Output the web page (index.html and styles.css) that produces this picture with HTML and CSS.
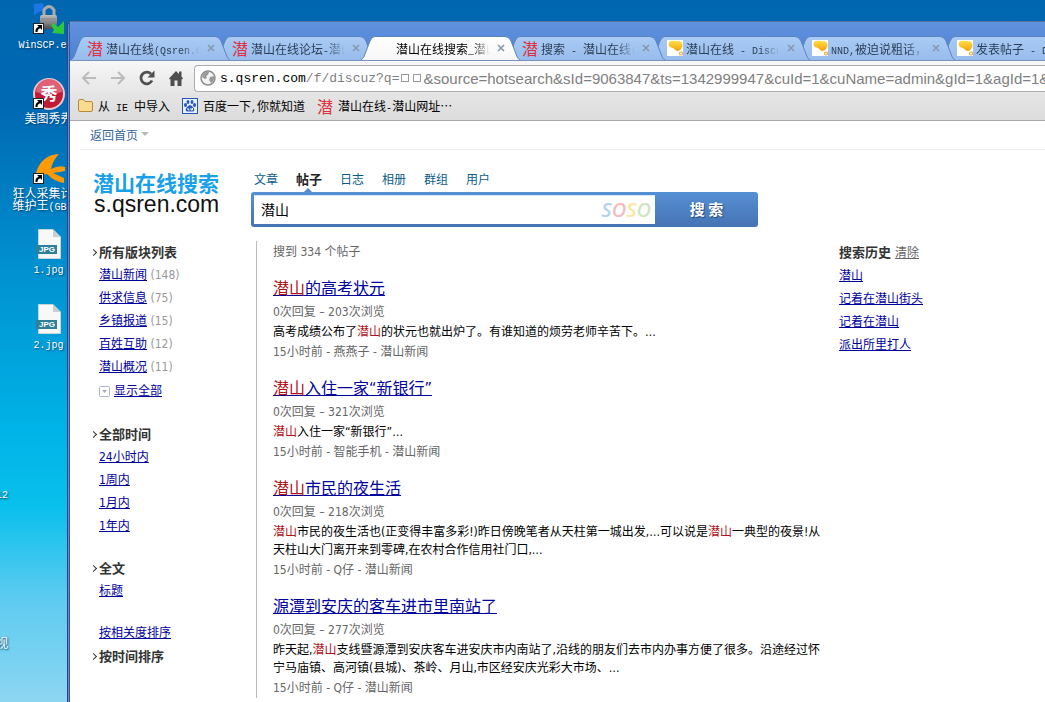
FILE: index.html
```html
<!DOCTYPE html>
<html lang="zh-CN">
<head>
  <meta charset="UTF-8">
  <title>潜山在线搜索_潜山</title>
  <link rel="stylesheet" href="styles.css">
</head>
<body>

  <!-- shared shapes -->
  <svg class="defs" width="0" height="0">
    <linearGradient id="tabBlue" x1="0" y1="0" x2="0" y2="1">
      <stop offset="0" stop-color="#a9cbf5"/><stop offset="1" stop-color="#98bcec"/>
    </linearGradient>
    <linearGradient id="tabWhite" x1="0" y1="0" x2="0" y2="1">
      <stop offset="0" stop-color="#ffffff"/><stop offset="1" stop-color="#f7f7f7"/>
    </linearGradient>
    <linearGradient id="gold" x1="0" y1="0" x2="0" y2="1">
      <stop offset="0" stop-color="#ffe04a"/><stop offset="1" stop-color="#f6a10c"/>
    </linearGradient>
    <linearGradient id="steel" x1="0" y1="0" x2="0" y2="1">
      <stop offset="0" stop-color="#bdbdbd"/><stop offset="1" stop-color="#4e4e4e"/>
    </linearGradient>
    <symbol id="tab" viewBox="0 0 160 24">
      <path d="M0.5 24C3 23 4 21 5 18L10 5Q12 0.5 15 0.5H145Q149 0.5 151 5L156 18C157 21 158 23 160 24"/>
    </symbol>
    <symbol id="x" viewBox="0 0 8 8">
      <path d="M1 1L7 7M7 1L1 7" stroke="#8798ae" stroke-width="1.6"/>
    </symbol>
    <symbol id="bubble" viewBox="0 0 16 16">
      <rect width="16" height="16" fill="#fff"/>
      <path d="M2 2Q4 0 10 1Q16 1 15.500 6Q14 11 10 11Q8 10 6 8Q0 7 2 2Z" fill="url(#gold)"/>
      <circle cx="14" cy="13.5" r="1.5" fill="none" stroke="#f6a93a" stroke-width="1.2"/>
    </symbol>
    <symbol id="shortcut" viewBox="0 0 11 11">
      <rect x="0.5" y="0.5" width="10" height="10" fill="#fff" stroke="#222"/>
      <path d="M4 2H9V7L7.300 5.300Q4.500 6 4.500 9H2.500Q2 5 5.700 3.700Z" fill="#000"/>
    </symbol>
    <symbol id="jpg" viewBox="0 0 26 30">
      <path d="M2.500 0.500H17L24.500 8V29.500H2.500Z" fill="#f8f8f8" stroke="#c9d4d9"/>
      <path d="M17 0.500V8H24.500Z" fill="#c8cdd0"/>
      <rect x="0" y="16" width="21" height="9" fill="#2f7f9a"/>
    </symbol>
  </svg>

  <div class="desktop">
    <div class="icons">
      <div class="shortcut">
        <div class="picture">
          <svg width="32" height="32" viewBox="0 0 32 32">
            <path d="M1 1L10 0L12 10L8 8L1 12Z" fill="#1977e8"/>
            <path d="M11 14V7Q16 0 21 7V14" fill="none" stroke="#aaa" stroke-width="3"/>
            <rect x="7" y="12" width="17" height="14" rx="2" fill="url(#steel)"/>
            <path d="M8 16H23M8 20H23" stroke="#888"/>
            <path d="M18 22L21 20L25 24L31 18V31L19 30L21 27Z" fill="#2dc640"/>
          </svg>
          <svg class="arrow" width="11" height="11"><use href="#shortcut"/></svg>
        </div>
        <span class="label"><span class="mono">WinSCP.exe</span></span>
      </div>
      <div class="shortcut">
        <div class="picture">
          <svg width="32" height="32" viewBox="0 0 32 32">
            <circle cx="16" cy="16" r="15" fill="#c11c37" stroke="#e7c9cf" stroke-width="2"/>
            <path d="M3 14A13 13 0 0 1 29 14Q16 18 3 14Z" fill="#df6076"/>
            <text class="seal" x="16" y="22" text-anchor="middle">秀</text>
          </svg>
          <svg class="arrow" width="11" height="11"><use href="#shortcut"/></svg>
        </div>
        <span class="label">美图秀秀</span>
      </div>
      <div class="shortcut">
        <div class="picture">
          <svg width="32" height="32" viewBox="0 0 32 32">
            <path d="M3 20Q8 2 26 1Q20 7 18 16Q26 12 32 14V18L20 20L31 25V30Q22 29 14 21L3 23Z" fill="#ff9a05"/>
          </svg>
          <svg class="arrow" width="11" height="11"><use href="#shortcut"/></svg>
        </div>
        <span class="label">狂人采集计划<br>维护王<span class="mono">(GBK)</span></span>
      </div>
      <div class="shortcut">
        <div class="picture">
          <svg width="26" height="30"><use href="#jpg"/><text class="ext" x="3" y="23">JPG</text></svg>
        </div>
        <span class="label"><span class="mono">1.jpg</span></span>
      </div>
      <div class="shortcut">
        <div class="picture">
          <svg width="26" height="30"><use href="#jpg"/><text class="ext" x="3" y="23">JPG</text></svg>
        </div>
        <span class="label"><span class="mono">2.jpg</span></span>
      </div>
      <span class="label stray stray-number"><span class="mono">12</span></span>
      <span class="label stray stray-video">视</span>
    </div>

    <div class="window">
      <div class="tabs">
        <div class="tab">
          <svg class="shape"><use href="#tab"/></svg>
          <span class="favicon">潜</span>
          <span class="title">潜山在线<span class="mono">(Qsren.Com)</span></span>
          <button aria-label="关闭"><svg width="8" height="8"><use href="#x"/></svg></button>
        </div>
        <div class="tab">
          <svg class="shape"><use href="#tab"/></svg>
          <span class="favicon">潜</span>
          <span class="title">潜山在线论坛<span class="mono">-</span>潜山</span>
          <button aria-label="关闭"><svg width="8" height="8"><use href="#x"/></svg></button>
        </div>
        <div class="tab active">
          <svg class="shape"><use href="#tab"/></svg>
          <span class="favicon"></span>
          <span class="title">潜山在线搜索<span class="mono">_</span>潜山</span>
          <button aria-label="关闭"><svg width="8" height="8"><use href="#x"/></svg></button>
        </div>
        <div class="tab">
          <svg class="shape"><use href="#tab"/></svg>
          <span class="favicon">潜</span>
          <span class="title">搜索<span class="mono"> - </span>潜山在线<span class="mono">(Q</span></span>
          <button aria-label="关闭"><svg width="8" height="8"><use href="#x"/></svg></button>
        </div>
        <div class="tab">
          <svg class="shape"><use href="#tab"/></svg>
          <span class="favicon"><svg width="16" height="16"><use href="#bubble"/></svg></span>
          <span class="title">潜山在线<span class="mono"> - Discuz</span></span>
          <button aria-label="关闭"><svg width="8" height="8"><use href="#x"/></svg></button>
        </div>
        <div class="tab">
          <svg class="shape"><use href="#tab"/></svg>
          <span class="favicon"><svg width="16" height="16"><use href="#bubble"/></svg></span>
          <span class="title"><span class="mono">NND,</span>被迫说粗话，</span>
          <button aria-label="关闭"><svg width="8" height="8"><use href="#x"/></svg></button>
        </div>
        <div class="tab">
          <svg class="shape"><use href="#tab"/></svg>
          <span class="favicon"><svg width="16" height="16"><use href="#bubble"/></svg></span>
          <span class="title">发表帖子<span class="mono"> - Discuz</span></span>
          <button aria-label="关闭"><svg width="8" height="8"><use href="#x"/></svg></button>
        </div>
      </div>

      <div class="toolbar">
        <button aria-label="后退"><svg width="16" height="14" viewBox="0 0 16 14"><path d="M15 7H2M8 1L2 7L8 13" fill="none" stroke="#bbb" stroke-width="2"/></svg></button>
        <button aria-label="前进"><svg width="16" height="14" viewBox="0 0 16 14"><path d="M1 7H14M8 1L14 7L8 13" fill="none" stroke="#bbb" stroke-width="2"/></svg></button>
        <button aria-label="刷新"><svg width="16" height="16" viewBox="0 0 16 16"><path d="M13 10.500A5.800 5.800 0 1 1 12 4" fill="none" stroke="#4f4f4f" stroke-width="2.800"/><path d="M15.500 0.500V7.500H8.500Z" fill="#4f4f4f"/></svg></button>
        <button aria-label="主页"><svg width="16" height="16" viewBox="0 0 16 16"><path d="M8 1L11 4V1.500H13.500V6.500L15 8.500L14 9.500L13.500 9V16H9.500V10.500H6.500V16H2.500V9L2 9.500L1 8.500Z" fill="#4f4f4f"/></svg></button>
        <div class="address">
          <svg width="16" height="16" viewBox="0 0 16 16">
            <circle cx="8" cy="8" r="7" fill="#f4f4f4" stroke="#8c8c8c" stroke-width="1.500"/>
            <path d="M3 4Q6 1 9 2L8 5L6 6L7 8L5 9L2 7ZM10 7L14 6Q15 11 11 13L9 10Z" fill="#999"/>
          </svg>
          <span class="url"><span class="path"><b>s.qsren.com</b>/f/discuz?q=</span><span class="glyph"></span><span class="glyph"></span>&amp;source=hotsearch&amp;sId=9063847&amp;ts=1342999947&amp;cuId=1&amp;cuName=admin&amp;gId=1&amp;agId=1&amp;ext=1</span>
        </div>
      </div>

      <div class="bookmarks">
        <a href="#">
          <svg width="15" height="13" viewBox="0 0 15 13"><path d="M0.500 11V2Q0.500 0.500 2 0.500H5.500L7 2.500H13Q14.500 2.500 14.500 4V11Q14.500 12.500 13 12.500H2Q0.500 12.500 0.500 11Z" fill="#fbdc8f" stroke="#b98a3c"/></svg>
          <span>从<span class="mono"> IE </span>中导入</span>
        </a>
        <a href="#">
          <svg width="16" height="16" viewBox="0 0 16 16">
            <rect x="0.500" y="0.500" width="15" height="15" fill="#e8f0fc" stroke="#2a55b8"/>
            <g fill="#2a55b8"><ellipse cx="3.500" cy="7" rx="1.500" ry="2"/><ellipse cx="6" cy="4" rx="1.400" ry="2"/><ellipse cx="10" cy="4" rx="1.400" ry="2"/><ellipse cx="12.500" cy="7" rx="1.500" ry="2"/><path d="M8 7Q10 7 12 10.500Q13 14 10 13.500H6Q3 14 4 10.500Q6 7 8 7Z"/></g>
            <path d="M6 10V12H7.500M9 10V12H10.500V10" fill="none" stroke="#fff"/>
          </svg>
          <span>百度一下<span class="mono">,</span>你就知道</span>
        </a>
        <a href="#"><span class="favicon">潜</span><span>潜山在线<span class="mono">-</span>潜山网址…</span></a>
      </div>

      <div class="page">
        <div class="topnav"><a href="#">返回首页</a><span class="caret"></span></div>

        <header>
          <a class="logo" href="#">
            <span class="logo-name">潜山在线搜索</span>
            <span class="logo-url">s.qsren.com</span>
          </a>
          <div class="search">
            <nav>
              <a href="#">文章</a>
              <a href="#" class="current">帖子</a>
              <a href="#">日志</a>
              <a href="#">相册</a>
              <a href="#">群组</a>
              <a href="#">用户</a>
            </nav>
            <form>
              <div class="field">
                <input type="text" value="潜山" aria-label="搜索关键词">
                <span class="soso"><i class="s1">S</i><i class="o1">O</i><i class="s2">S</i><i class="o2">O</i></span>
              </div>
              <button type="button">搜 索</button>
            </form>
          </div>
        </header>

        <div class="columns">
          <aside class="filters">
            <ul>
              <li class="on">所有版块列表</li>
              <li><a href="#">潜山新闻</a> (148)</li>
              <li><a href="#">供求信息</a> (75)</li>
              <li><a href="#">乡镇报道</a> (15)</li>
              <li><a href="#">百姓互助</a> (12)</li>
              <li><a href="#">潜山概况</a> (11)</li>
              <li class="more">
                <svg width="11" height="11" viewBox="0 0 11 11"><rect x="0.500" y="0.500" width="10" height="10" rx="1" fill="#fff" stroke="#a9b4d0"/><path d="M3 4H8L5.500 7Z" fill="#a3abc0"/></svg>
                <a href="#">显示全部</a>
              </li>
            </ul>
            <ul>
              <li class="on">全部时间</li>
              <li><a href="#">24小时内</a></li>
              <li><a href="#">1周内</a></li>
              <li><a href="#">1月内</a></li>
              <li><a href="#">1年内</a></li>
            </ul>
            <ul>
              <li class="on">全文</li>
              <li><a href="#">标题</a></li>
            </ul>
            <ul>
              <li><a href="#">按相关度排序</a></li>
              <li class="on">按时间排序</li>
            </ul>
          </aside>

          <main>
            <p class="count">搜到 334 个帖子</p>
            <article>
              <h3><a href="#"><em>潜山</em>的高考状元</a></h3>
              <p class="meta">0次回复 – 203次浏览</p>
              <p class="text">高考成绩公布了<em>潜山</em>的状元也就出炉了。有谁知道的烦劳老师辛苦下。…</p>
              <p class="meta">15小时前 - 燕燕子 - 潜山新闻</p>
            </article>
            <article>
              <h3><a href="#"><em>潜山</em>入住一家“新银行”</a></h3>
              <p class="meta">0次回复 – 321次浏览</p>
              <p class="text"><em>潜山</em>入住一家“新银行”…</p>
              <p class="meta">15小时前 - 智能手机 - 潜山新闻</p>
            </article>
            <article>
              <h3><a href="#"><em>潜山</em>市民的夜生活</a></h3>
              <p class="meta">0次回复 – 218次浏览</p>
              <p class="text"><em>潜山</em>市民的夜生活也(正变得丰富多彩!)昨日傍晚笔者从天柱第一城出发,…可以说是<em>潜山</em>一典型的夜景!从<br>天柱山大门离开来到零碑,在农村合作信用社门口,…</p>
              <p class="meta">15小时前 - Q仔 - 潜山新闻</p>
            </article>
            <article>
              <h3><a href="#">源潭到安庆的客车进市里南站了</a></h3>
              <p class="meta">0次回复 – 277次浏览</p>
              <p class="text">昨天起,<em>潜山</em>支线暨源潭到安庆客车进安庆市内南站了,沿线的朋友们去市内办事方便了很多。沿途经过怀<br>宁马庙镇、高河镇(县城)、茶岭、月山,市区经安庆光彩大市场、…</p>
              <p class="meta">15小时前 - Q仔 - 潜山新闻</p>
            </article>
          </main>

          <aside class="history">
            <h4>搜索历史 <a href="#">清除</a></h4>
            <ul>
              <li><a href="#">潜山</a></li>
              <li><a href="#">记着在潜山街头</a></li>
              <li><a href="#">记着在潜山</a></li>
              <li><a href="#">派出所里打人</a></li>
            </ul>
          </aside>
        </div>
      </div>
    </div>
  </div>

</body>
</html>
```
FILE: styles.css
```css
* {
  box-sizing: border-box;
}

body {
  margin: 0;
  font-family: "DejaVu Sans Condensed", "Noto Sans CJK SC", sans-serif;
  font-size: 12px;
  color: #000;
  overflow: hidden;
}

ul, p, h3, h4 {
  margin: 0;
  padding: 0;
}

ul {
  list-style: none;
}

a {
  color: #00009c;
}

em {
  font-style: normal;
  color: #b01016;
}

svg {
  display: block;
  flex: none;
}

button {
  padding: 0;
  border: none;
  background: none;
  flex: none;
}

.defs {
  position: absolute;
}

.mono {
  font-family: "Liberation Mono", monospace;
  font-size: 10px;
  white-space: pre;
}

/* desktop */
.desktop {
  display: flex;
  height: 100vh;
  overflow: hidden;
  background: linear-gradient(#0066b0, #0069b3 15%, #0090d0 38%, #00b4e8 62%, #08c0ec 72%, #5ccbf0 85%, #8dd6f2);
}

.icons {
  position: relative;
  width: 67px;
  flex: none;
  padding-left: 11px;
  overflow: hidden;
}

.shortcut {
  width: 75px;
  height: 75px;
  display: flex;
  flex-direction: column;
  align-items: center;
}

.picture {
  position: relative;
  height: 37px;
  display: flex;
  align-items: center;
}

.arrow {
  position: absolute;
  left: 0;
  bottom: 3px;
}

.label {
  font-family: "Noto Sans CJK SC", sans-serif;
  line-height: 12px;
  color: #fff;
  white-space: nowrap;
  text-shadow: 1px 1px 2px #003a66;
}

.seal {
  font-family: "Noto Sans CJK SC", sans-serif;
  font-size: 17px;
  font-weight: bold;
  fill: #fff;
}

.ext {
  font-family: "Liberation Sans", sans-serif;
  font-size: 8px;
  font-weight: bold;
  fill: #fff;
}

.stray {
  position: absolute;
  left: -4px;
}

.stray-number {
  top: 487px;
}

.stray-video {
  top: 637px;
}

/* browser window */
.window {
  flex: 1;
  min-width: 0;
  margin-top: 21px;
  padding-left: 2px;
  border-left: 1px solid #2c4288;
  border-top: 1px solid #53719c;
  border-top-left-radius: 5px;
  background: linear-gradient(to right, #6d8ac8 1px, #34549c 1px, #34549c 2px, #fff 2px);
  overflow: hidden;
}

.tabs {
  display: flex;
  height: 39px;
  padding-top: 14px;
  background: linear-gradient(#5f92df, #4f80d2);
  border-bottom: 1px solid #7792bd;
}

.tab {
  position: relative;
  flex: none;
  width: 160px;
  height: 24px;
  margin-right: -15px;
  padding: 0 13px 0 17px;
  display: flex;
  align-items: center;
  color: #2c3e55;
}

.tab:nth-child(1) { z-index: 7; }
.tab:nth-child(2) { z-index: 6; }
.tab:nth-child(3) { z-index: 8; }
.tab:nth-child(4) { z-index: 5; }
.tab:nth-child(5) { z-index: 4; }
.tab:nth-child(6) { z-index: 3; }
.tab:nth-child(7) { z-index: 2; }

.tab .shape {
  position: absolute;
  left: 0;
  top: 0;
  width: 160px;
  height: 24px;
  z-index: -1;
  fill: url(#tabBlue);
  stroke: #5d83bb;
}

.tab.active {
  color: #000;
}

.tab.active .shape {
  fill: url(#tabWhite);
}

.favicon {
  flex: none;
  width: 16px;
  font-family: "Noto Sans CJK SC", sans-serif;
  font-size: 16px;
  line-height: 16px;
  color: #e0303c;
}

.title {
  flex: 1;
  min-width: 0;
  margin-left: 3px;
  font-family: "Noto Sans CJK SC", sans-serif;
  white-space: nowrap;
  overflow: hidden;
  -webkit-mask-image: linear-gradient(to right, #000 80%, transparent);
  mask-image: linear-gradient(to right, #000 80%, transparent);
}

.tab button {
  margin: 0 2px 0 7px;
}

.toolbar {
  display: flex;
  align-items: center;
  gap: 13px;
  height: 32px;
  padding: 2px 0 0 11px;
  background: linear-gradient(#f7f7f7, #e6e6e6);
}

.address {
  flex: 1;
  min-width: 0;
  display: flex;
  align-items: center;
  gap: 4px;
  height: 27px;
  margin-left: -3px;
  padding-left: 5px;
  border: 1px solid #a9adb2;
  border-right: none;
  border-radius: 4px 0 0 4px;
  background: #fff;
  overflow: hidden;
}

.url {
  display: flex;
  align-items: center;
  font-family: "Liberation Sans", sans-serif;
  font-size: 15px;
  color: #808080;
  white-space: nowrap;
}

.path {
  font-family: "Liberation Mono", monospace;
  font-size: 13px;
}

.path b {
  font-weight: normal;
  color: #000;
}

.glyph {
  width: 8px;
  height: 8px;
  margin: 0 2px;
  border: 1px solid #999;
}

.bookmarks {
  display: flex;
  align-items: center;
  gap: 12px;
  height: 28px;
  padding: 0 0 2px 8px;
  background: linear-gradient(#e5e5e5, #dcdcdc);
  border-bottom: 1px solid #a9a9ae;
}

.bookmarks a {
  display: flex;
  align-items: center;
  font-family: "Noto Sans CJK SC", sans-serif;
  color: #000;
  text-decoration: none;
  white-space: nowrap;
}

.bookmarks svg, .bookmarks .favicon {
  margin-right: 5px;
}

/* page */
.page {
  padding-left: 10px;
}

.topnav {
  display: flex;
  align-items: center;
  gap: 3px;
  height: 29px;
  padding: 0 0 2px 10px;
  border-bottom: 1px solid #ececec;
}

.topnav a {
  color: #336699;
  text-decoration: none;
}

.caret {
  border: 4px solid transparent;
  border-top-color: #b8b8b8;
  border-bottom: none;
}

header {
  display: flex;
  padding: 20px 0 0 11px;
}

.logo {
  display: flex;
  flex-direction: column;
  width: 160px;
  padding-left: 2px;
  text-decoration: none;
}

.logo-name {
  font-family: "Noto Sans CJK SC", sans-serif;
  font-size: 21px;
  font-weight: bold;
  line-height: 24px;
  color: #18a0e8;
}

.logo-url {
  padding-left: 1px;
  font-family: "Liberation Sans", sans-serif;
  font-size: 23px;
  line-height: 20px;
  color: #111;
}

nav {
  display: flex;
  gap: 18px;
  height: 22px;
  padding-left: 3px;
}

nav a {
  position: relative;
  line-height: 20px;
  color: #0b5c8c;
  text-decoration: none;
}

nav .current {
  font-size: 13px;
  font-weight: bold;
  color: #222;
}

nav .current::after {
  content: "";
  position: absolute;
  left: 8px;
  bottom: 0;
  border: 4px solid transparent;
  border-bottom-color: #5089cd;
  border-top: none;
}

form {
  display: flex;
  width: 507px;
  height: 35px;
  padding: 3px 0 3px 3px;
  border-radius: 3px;
  background: linear-gradient(#5590d4, #4673b4);
}

.field {
  display: flex;
  align-items: center;
  flex: 1;
  padding: 0 4px 0 7px;
  background: #fff;
  border-top: 1px solid #d8e6f5;
}

.field input {
  flex: 1;
  min-width: 0;
  padding: 0 0 2px;
  border: none;
  outline: none;
  font-family: "Noto Sans CJK SC", sans-serif;
  font-size: 14px;
}

.soso {
  padding-bottom: 2px;
  font-family: "Open Sans", sans-serif;
  font-size: 20px;
  font-weight: 600;
}

.s1 { color: #b5d3e8; }
.o1 { color: #f5bcc0; }
.s2 { color: #fae5a5; }
.o2 { color: #cfe5c5; }

form button {
  width: 103px;
  padding-bottom: 2px;
  font-family: "Noto Sans CJK SC", sans-serif;
  font-size: 15px;
  font-weight: bold;
  color: #fff;
  text-shadow: 1px 1px 1px #24497c;
}

.columns {
  display: grid;
  grid-template-columns: 165px minmax(0, 567px) auto;
  align-items: start;
  padding: 14px 0 0 11px;
}

.filters ul {
  margin-bottom: 19px;
}

.filters li {
  padding-left: 8px;
  line-height: 23px;
  height: 23px;
  color: #999;
}

.filters .on {
  position: relative;
  font-size: 13px;
  font-weight: bold;
  color: #333;
}

.filters .on::before {
  content: "";
  position: absolute;
  left: 0;
  top: 9px;
  width: 4px;
  height: 4px;
  border: solid #333;
  border-width: 1px 1px 0 0;
  transform: rotate(45deg);
}

.filters .more {
  display: flex;
  align-items: center;
  gap: 4px;
  height: 25px;
}

main {
  padding: 1px 0 0 16px;
  border-left: 1px solid #bbb;
  white-space: nowrap;
}

.count {
  margin-bottom: 14px;
  line-height: 20px;
  color: #666;
}

article {
  margin-bottom: 14px;
}

article:last-child {
  margin-bottom: 0;
}

h3 {
  font-size: 16px;
  font-weight: normal;
  line-height: 26px;
}

.meta {
  line-height: 20px;
  color: #666;
}

.text {
  padding: 1px 0;
  line-height: 18px;
}

.history {
  padding-left: 16px;
  line-height: 23px;
  white-space: nowrap;
}

.history h4 {
  font-size: 13px;
  color: #333;
}

.history h4 a {
  font-size: 12px;
  font-weight: normal;
  color: #666;
}
```
